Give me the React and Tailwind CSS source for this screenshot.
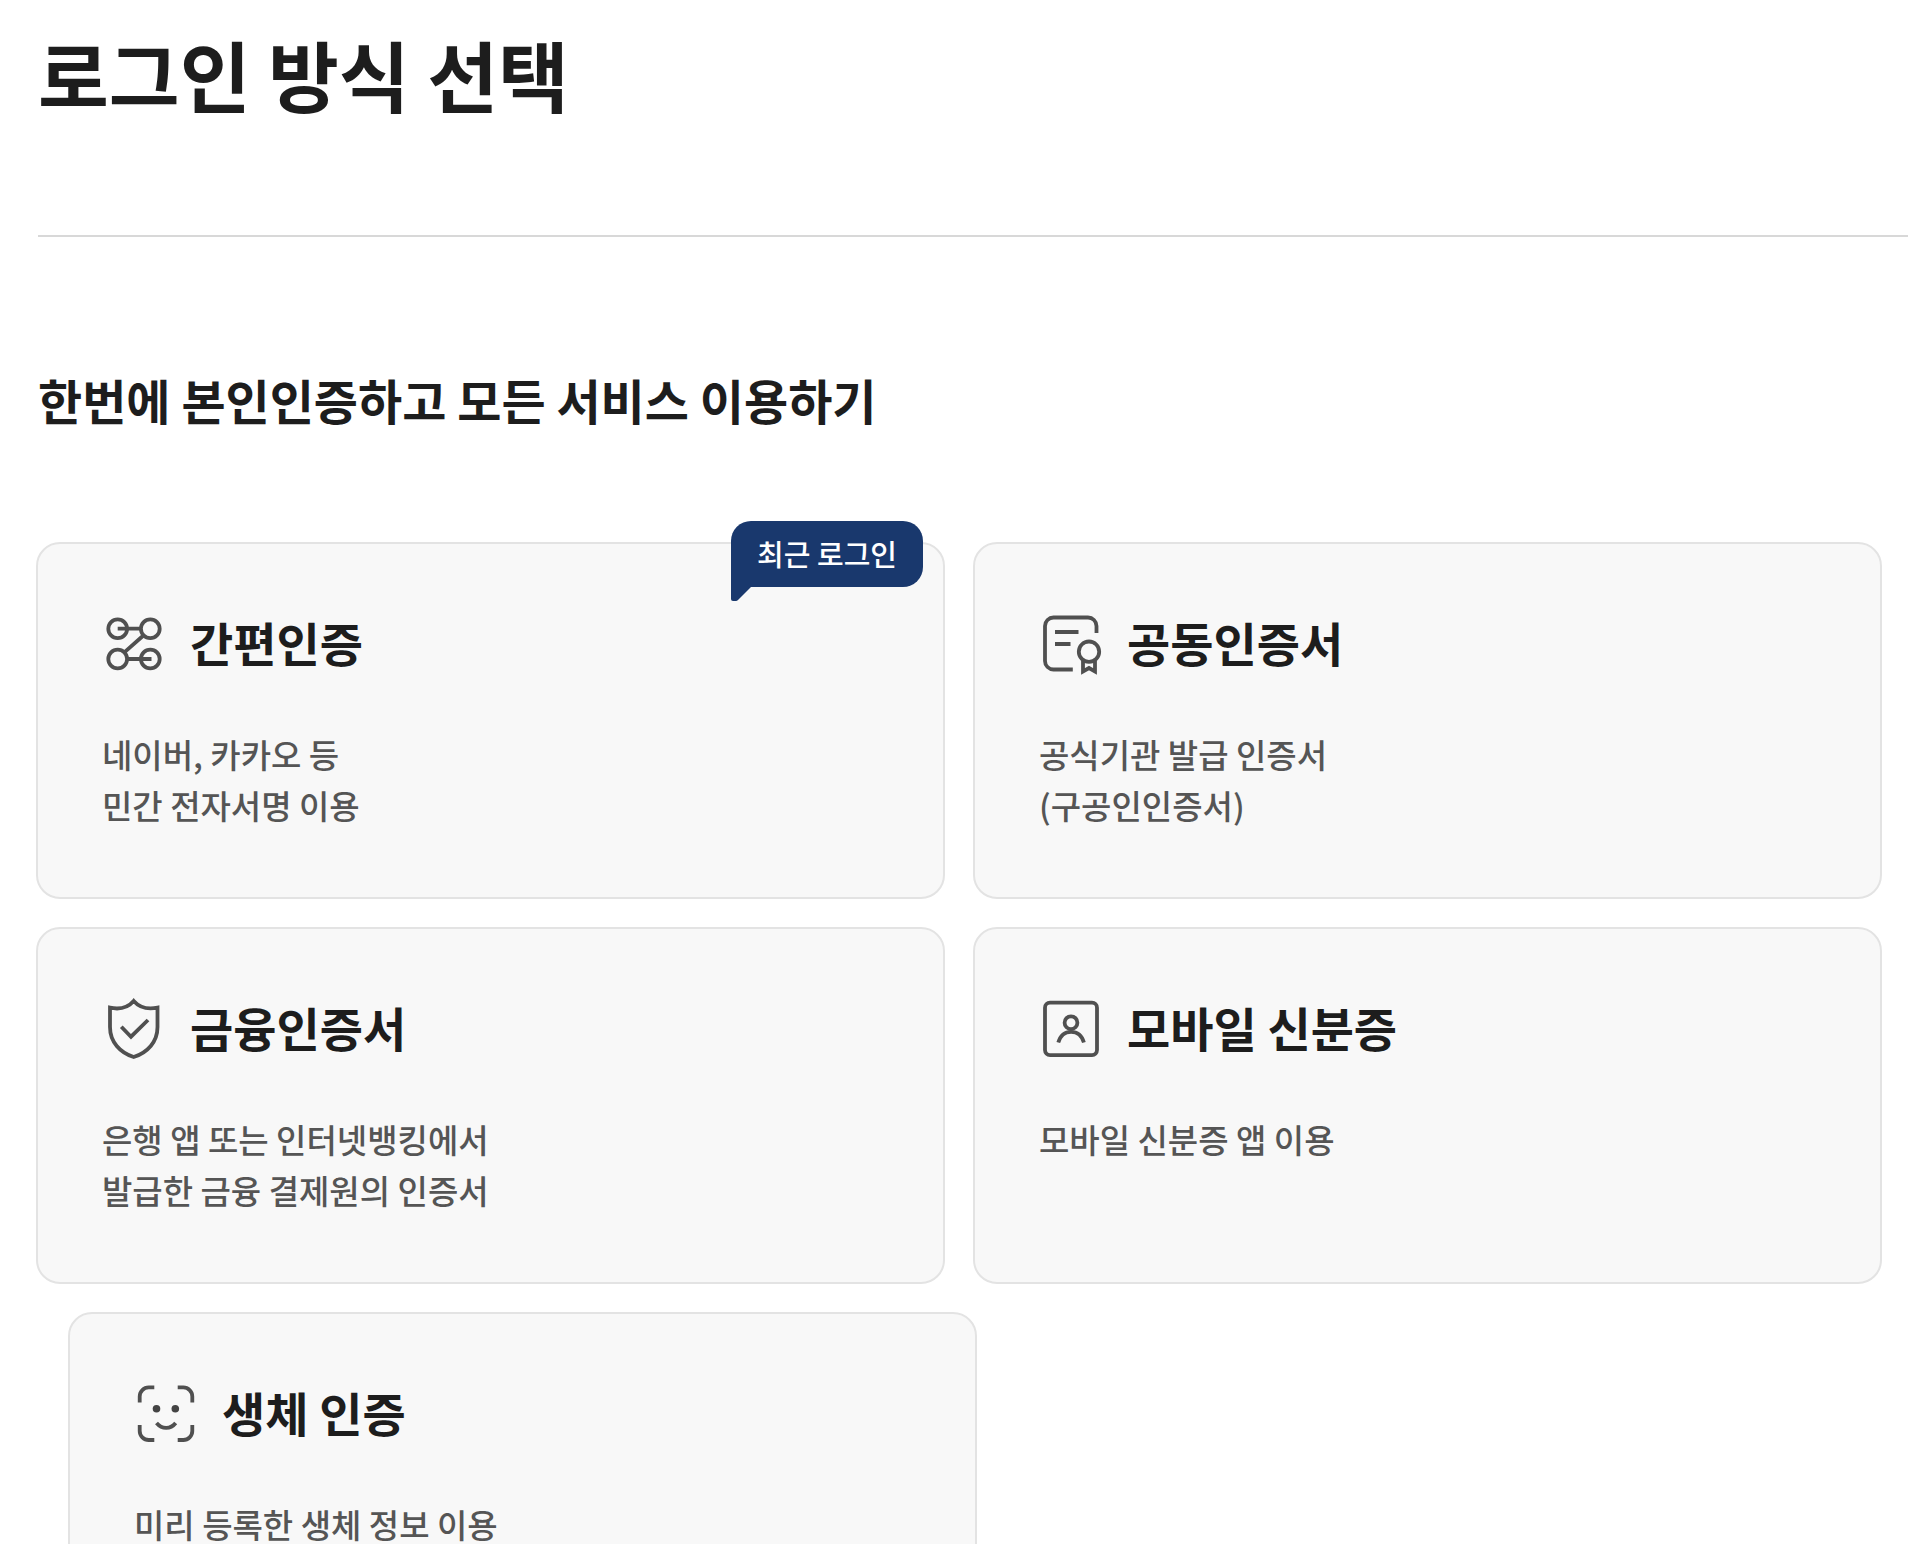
const cards = [
  { title: '간편인증', lines: ['네이버, 카카오 등', '민간 전자서명 이용'], icon: 'nodes', recent: true },
  { title: '공동인증서', lines: ['공식기관 발급 인증서', '(구공인인증서)'], icon: 'certificate' },
  { title: '금융인증서', lines: ['은행 앱 또는 인터넷뱅킹에서', '발급한 금융 결제원의 인증서'], icon: 'shield' },
  { title: '모바일 신분증', lines: ['모바일 신분증 앱 이용'], icon: 'idcard' },
  { title: '생체 인증', lines: ['미리 등록한 생체 정보 이용'], icon: 'face', indent: true },
];

const icons = {
  nodes: (
    <>
      <circle cx="15.7" cy="17.7" r="9.4" />
      <circle cx="48.3" cy="17.7" r="9.4" />
      <circle cx="15.7" cy="48" r="9.4" />
      <circle cx="48.3" cy="48" r="9.4" />
      <path d="M15.7 17.7h23M41.4 24.5L22.6 41.2M25.5 48h24" />
    </>
  ),
  certificate: (
    <>
      <path d="M57.5 22V15a8.500 8.500 0 0 0-8.500-8.500h-34.500A8.500 8.500 0 0 0 6 15v35a8.500 8.500 0 0 0 8.500 8.500h19.300" />
      <path d="M16 21h23.500M16 33h15.500" />
      <circle cx="50" cy="40.700" r="10.200" />
      <path d="M44 49.500v11l6-3.500 6 3.500v-11" />
    </>
  ),
  shield: (
    <>
      <path d="M31.700 5C26.500 11 19 14 8 11.700V31c0 15 10 25.500 23.700 30C45.500 56.500 55.500 46 55.500 31V11.700C44.500 14 37 11 31.700 5z" />
      <path d="M19.300 30.700l9.700 10L46 24" />
    </>
  ),
  idcard: (
    <>
      <rect x="6" y="6.700" width="52" height="52.400" rx="5" />
      <circle cx="32" cy="26.700" r="6.400" />
      <path d="M19.300 46.500c2-7 6.700-10.700 12.800-10.700s10.800 3.700 12.800 10.700" />
    </>
  ),
  face: (
    <>
      <path d="M5.700 21.500V15.400a9 9 0 0 1 9-9h5.600M43.700 6.400h5.600a9 9 0 0 1 9 9v6.100M58.300 44v6a9 9 0 0 1-9 9h-5.600M20.300 59h-5.600a9 9 0 0 1-9-9v-6" />
      <path d="M22.500 42c5.500 6.500 14 6.500 19.200 0" />
      <circle cx="22.500" cy="27.700" r="3.800" fill="#444" stroke="none" />
      <circle cx="41.300" cy="27.700" r="3.800" fill="#444" stroke="none" />
    </>
  ),
};

function RecentBadge() {
  return (
    <span className="absolute -top-[21px] right-[22px] rounded-t-[20px] rounded-br-[20px] bg-[#19386d] px-[26px] pb-0.5 text-[29px] leading-[64px] font-medium whitespace-nowrap text-white">
      최근 로그인
      <svg viewBox="0 0 20 14" className="absolute top-full left-0 h-[14px] w-5" fill="#19386d" aria-hidden="true">
        <path d="M0 0h20L7 13q-1 1-2 1H2q-2 0-2-2z" />
      </svg>
    </span>
  );
}

function Card({ title, lines, icon, recent, indent }) {
  return (
    <li className={indent ? 'relative -mr-8 ml-8' : 'relative'}>
      <a
        href="#"
        className="block h-full min-h-[357px] rounded-3xl border-2 border-[#e3e3e3] bg-[#f8f8f8] px-16 pt-[67px] pb-16"
      >
        <span className="flex items-center gap-6">
          <svg viewBox="0 0 64 64" className="size-16 shrink-0" fill="none" stroke="#505050" strokeWidth="3.8" aria-hidden="true">
            {icons[icon]}
          </svg>
          <strong className="pb-0.5 text-[47px] leading-[48px] font-bold">{title}</strong>
        </span>
        <span className="mt-[54px] block text-[33px] leading-[51px] font-medium text-[#555]">
          {lines.map((line) => (
            <span key={line} className="block">
              {line}
            </span>
          ))}
        </span>
      </a>
      {recent && <RecentBadge />}
    </li>
  );
}

export default function App() {
  return (
    <main className="min-h-screen overflow-x-hidden bg-white pl-9 font-['Noto_Sans_CJK_KR',sans-serif] text-[#1d1d1d]">
      <div className="pl-0.5">
        <h1 className="pt-6 text-[77px] leading-[100px] font-bold">로그인 방식 선택</h1>
        <hr className="mt-[111px] border-t-2 border-[#d8d8d8]" />
        <h2 className="mt-[138px] text-5xl leading-[48px] font-bold">한번에 본인인증하고 모든 서비스 이용하기</h2>
      </div>
      <ul className="mt-[119px] mr-[26px] grid grid-cols-2 gap-7">
        {cards.map((card) => (
          <Card key={card.title} {...card} />
        ))}
      </ul>
    </main>
  );
}
